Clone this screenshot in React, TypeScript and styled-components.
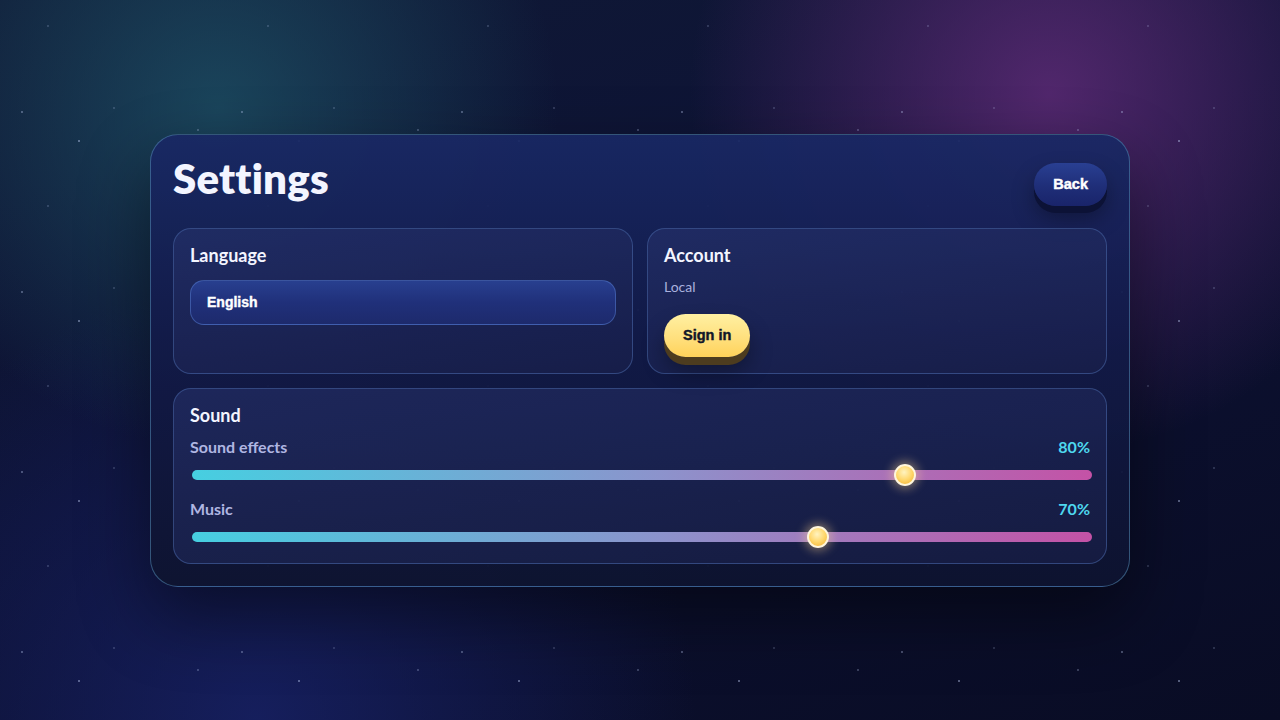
import { useState } from "react";
import styled, { createGlobalStyle } from "styled-components";

const GlobalStyle = createGlobalStyle`
  html, body {
    margin: 0;
    padding: 0;
    height: 100%;
  }

  body {
    background: #0b1030;
    font-family: Lato, "Open Sans", sans-serif;
    color: #f2f4ff;
    overflow: hidden;
  }

  * {
    box-sizing: border-box;
  }
`;

const Scene = styled.div`
  position: relative;
  width: 100vw;
  height: 100vh;
  display: flex;
  align-items: center;
  justify-content: center;
  background:
    radial-gradient(circle at 17% 15%, rgba(30, 84, 104, 0.75) 0, rgba(30, 84, 104, 0) 340px),
    radial-gradient(circle at 82% 13%, rgba(98, 44, 122, 0.8) 0, rgba(98, 44, 122, 0) 360px),
    radial-gradient(circle at 20% 100%, rgba(24, 34, 104, 0.8) 0, rgba(24, 34, 104, 0) 440px),
    linear-gradient(160deg, #101a36 0%, #0d1235 45%, #090c24 100%);

  /* starfield tile, 220 x 180 */
  &::before {
    content: "";
    position: absolute;
    inset: 0;
    pointer-events: none;
    background-image:
      radial-gradient(circle at 22px 112px, rgba(200, 215, 255, 0.7) 0, rgba(200, 215, 255, 0) 1.3px),
      radial-gradient(circle at 114px 108px, rgba(200, 215, 255, 0.6) 0, rgba(200, 215, 255, 0) 1px),
      radial-gradient(circle at 79px 141px, rgba(200, 215, 255, 0.75) 0, rgba(200, 215, 255, 0) 1.5px),
      radial-gradient(circle at 48px 26px, rgba(200, 215, 255, 0.6) 0, rgba(200, 215, 255, 0) 1px),
      radial-gradient(circle at 198px 130px, rgba(200, 215, 255, 0.6) 0, rgba(200, 215, 255, 0) 1.2px);
    background-size: 220px 180px;
  }
`;

const Panel = styled.section`
  position: relative;
  width: 980px;
  padding: 18px 22px 22px;
  border-radius: 28px;
  border: 1px solid rgba(84, 140, 180, 0.55);
  background: linear-gradient(180deg, rgba(25, 40, 100, 0.94) 0%, rgba(18, 26, 72, 0.94) 45%, rgba(14, 20, 48, 0.94) 100%);
  box-shadow: 0 30px 70px rgba(0, 0, 0, 0.45);
`;

const Header = styled.header`
  display: flex;
  justify-content: space-between;
  align-items: flex-start;
  margin-bottom: 22px;
`;

const Title = styled.h1`
  margin: 0;
  font-family: Lato, sans-serif;
  font-size: 42px;
  font-weight: 800;
  line-height: 50px;
  letter-spacing: 0.2px;
  color: #f3f5ff;
`;

const PillButton = styled.button<{ $tone: "blue" | "gold" }>`
  height: 43px;
  padding: 0 19px;
  border: none;
  border-radius: 22px;
  font-family: "Liberation Sans", Arial, sans-serif;
  font-size: 14.5px;
  font-weight: 700;
  -webkit-text-stroke: 0.45px currentColor;
  cursor: pointer;
  color: ${(p) => (p.$tone === "gold" ? "#121729" : "#ffffff")};
  background: ${(p) =>
    p.$tone === "gold"
      ? "linear-gradient(180deg, #fff0a2 0%, #ffe07e 55%, #ffd25a 100%)"
      : "linear-gradient(180deg, #293f92 0%, #1f2e78 55%, #19246a 100%)"};
  box-shadow: ${(p) =>
    p.$tone === "gold"
      ? "0 8px 0 #4d3c1f, 0 14px 22px rgba(0, 0, 0, 0.35)"
      : "0 7px 0 #0c1236, 0 12px 22px rgba(0, 0, 0, 0.35)"};
`;

const BackButton = styled(PillButton)`
  margin-top: 10px;
`;

const CardRow = styled.div`
  display: grid;
  grid-template-columns: 1fr 1fr;
  gap: 14px;
  margin-bottom: 14px;
`;

const Card = styled.div<{ $height?: number }>`
  height: ${(p) => (p.$height ? `${p.$height}px` : "auto")};
  padding: 15px 16px 15px;
  border-radius: 18px;
  border: 1px solid rgba(72, 104, 168, 0.55);
  background: linear-gradient(170deg, rgba(40, 52, 110, 0.55) 0%, rgba(28, 34, 78, 0.55) 100%);
`;

const CardTitle = styled.h2`
  margin: 0;
  font-family: Lato, sans-serif;
  font-size: 18px;
  font-weight: 700;
  line-height: 22px;
  color: #f3f5ff;
`;

const Select = styled.div`
  margin-top: 14px;
  height: 45px;
  display: flex;
  align-items: center;
  padding: 0 16px;
  border-radius: 14px;
  border: 1px solid rgba(84, 120, 200, 0.55);
  background: linear-gradient(180deg, #283f8f 0%, #20307a 50%, #1d2a6c 100%);
  font-family: "Liberation Sans", Arial, sans-serif;
  font-size: 14px;
  font-weight: 700;
  -webkit-text-stroke: 0.4px currentColor;
  color: #ffffff;
`;

const Muted = styled.p`
  margin: 12px 0 18px;
  font-family: Lato, sans-serif;
  font-size: 14px;
  line-height: 18px;
  color: #aab1de;
`;

const Sliders = styled.div`
  margin-top: 11px;
  display: flex;
  flex-direction: column;
  gap: 13px;
`;

const SliderRow = styled.div`
  display: flex;
  flex-direction: column;
  gap: 7px;
`;

const SliderHead = styled.div`
  display: flex;
  justify-content: space-between;
  align-items: center;
  font-family: Lato, sans-serif;
  font-size: 16px;
  line-height: 20px;
  font-weight: 700;
`;

const SliderLabel = styled.span`
  color: #b0b6e2;
`;

const SliderValue = styled.span`
  color: #4ed8ef;
`;

const Range = styled.input.attrs({ type: "range" })`
  -webkit-appearance: none;
  appearance: none;
  display: block;
  width: 100%;
  height: 22px;
  margin: 0 -2px 0 2px;
  background: transparent;
  outline: none;

  &::-webkit-slider-runnable-track {
    height: 10px;
    border-radius: 5px;
    background: linear-gradient(90deg, #46cfe1 0%, #8c93cc 52%, #c452a6 100%);
  }

  &::-webkit-slider-thumb {
    -webkit-appearance: none;
    width: 22px;
    height: 22px;
    margin-top: -6px;
    border-radius: 50%;
    border: 2px solid #fff6dc;
    background: radial-gradient(circle at 45% 35%, #fff3c0 0%, #ffd76c 50%, #f0ad2c 100%);
    box-shadow: 0 0 10px 3px rgba(255, 215, 140, 0.4);
  }
`;

const channels = [
  { id: "sfx", label: "Sound effects", value: 80 },
  { id: "music", label: "Music", value: 70 },
];

export default function App() {
  const [levels, setLevels] = useState<Record<string, number>>(
    Object.fromEntries(channels.map((c) => [c.id, c.value]))
  );

  return (
    <Scene>
      <GlobalStyle />
      <Panel>
        <Header>
          <Title>Settings</Title>
          <BackButton $tone="blue">Back</BackButton>
        </Header>

        <CardRow>
          <Card $height={146}>
            <CardTitle>Language</CardTitle>
            <Select>English</Select>
          </Card>
          <Card $height={146}>
            <CardTitle>Account</CardTitle>
            <Muted>Local</Muted>
            <PillButton $tone="gold">Sign in</PillButton>
          </Card>
        </CardRow>

        <Card>
          <CardTitle>Sound</CardTitle>
          <Sliders>
            {channels.map((c) => (
              <SliderRow key={c.id}>
                <SliderHead>
                  <SliderLabel>{c.label}</SliderLabel>
                  <SliderValue>{levels[c.id]}%</SliderValue>
                </SliderHead>
                <Range
                  min={0}
                  max={100}
                  value={levels[c.id]}
                  onChange={(e) =>
                    setLevels({ ...levels, [c.id]: Number(e.target.value) })
                  }
                />
              </SliderRow>
            ))}
          </Sliders>
        </Card>
      </Panel>
    </Scene>
  );
}
